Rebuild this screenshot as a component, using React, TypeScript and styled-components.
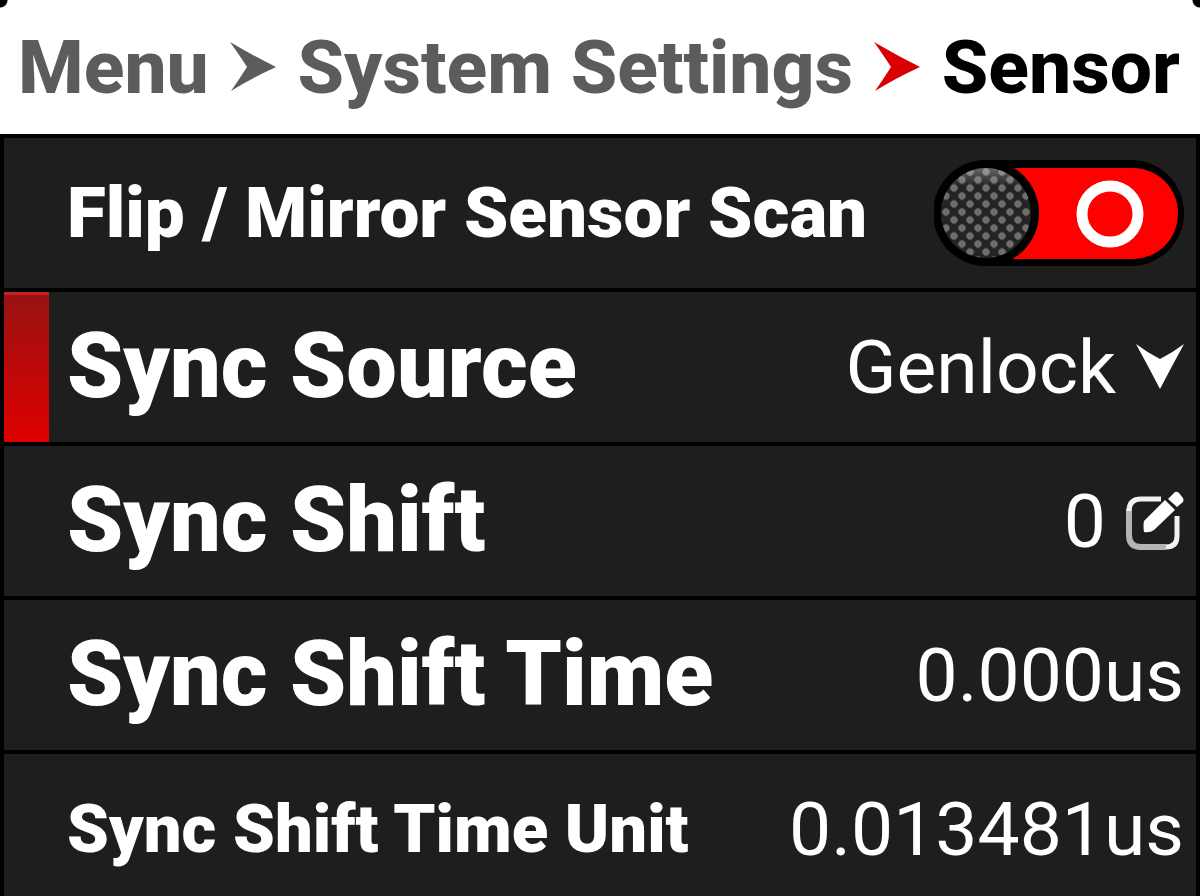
import React, { useState } from "react";
import styled, { createGlobalStyle, css } from "styled-components";

const GlobalStyle = createGlobalStyle`
  *, *::before, *::after { box-sizing: border-box; }
  body { margin: 0; background: #000; }
  button, input, select { font: inherit; color: inherit; }
`;

const Screen = styled.div`
  display: flex;
  flex-direction: column;
  height: 100vh;
  overflow: hidden;
  background: #000;
  color: #fff;
  font-family: Roboto, "Liberation Sans", sans-serif;
`;

const Header = styled.header`
  flex: none;
  min-height: 134px;
  padding: 0 20px 0 18px;
  display: flex;
  align-items: center;
  background:
    radial-gradient(circle at 0 0, #000 7px, transparent 8px),
    radial-gradient(circle at 100% 0, #000 7px, transparent 8px),
    #fff;
`;

const Crumbs = styled.nav`
  flex: 1;
  display: flex;
  align-items: center;
  justify-content: space-between;
  font-size: 75px;
  font-weight: 800;
  line-height: 90px;
  white-space: nowrap;
`;

const Crumb = styled.a<{ $current?: boolean }>`
  color: ${(p) => (p.$current ? "#000" : "#5c5c5c")};
  text-decoration: none;
`;

const Arrow = styled.svg<{ $color: string }>`
  flex: none;
  width: 46px;
  height: 50px;
  fill: ${(p) => p.$color};
`;

const List = styled.main`
  flex: none;
  padding: 0 4px;
`;

const Row = styled.div<{ $selected?: boolean }>`
  display: flex;
  align-items: center;
  justify-content: space-between;
  height: 154px;
  border-top: 4px solid #000;
  padding: 0 12px 0 20px;
  background: #1e1e1e;

  &::before {
    content: "";
    align-self: stretch;
    width: 45px;
    margin-left: -20px;
    ${(p) =>
      p.$selected &&
      css`
        border-top: 3px solid #c62222;
        background: linear-gradient(#991212, #e00000);
      `}
  }
`;

type LabelSize = "small" | "medium" | "large";

const labelSizes: Record<LabelSize, number> = { small: 67, medium: 71, large: 90 };

const labelText = css<{ $size: LabelSize }>`
  flex: 1;
  padding-left: 18px;
  font-size: ${(p) => labelSizes[p.$size]}px;
  font-weight: 900;
  line-height: 100px;
  white-space: nowrap;
`;

const Label = styled.label<{ $size: LabelSize }>`
  ${labelText}
`;

const Name = styled.span<{ $size: LabelSize }>`
  ${labelText}
`;

const Value = styled.span`
  font-size: 75px;
  font-weight: 400;
  white-space: nowrap;
`;

const Field = styled.div`
  display: flex;
  align-items: center;
  font-size: 75px;
`;

const Select = styled.select`
  appearance: none;
  border: 0;
  padding: 0;
  margin-right: 20px;
  background: transparent;
  field-sizing: content;
  text-align-last: right;
  outline: none;
`;

const NumberBox = styled.input`
  width: 160px;
  border: 0;
  padding: 0;
  margin-right: 20px;
  background: transparent;
  text-align: right;
  outline: none;
`;

const EditButton = styled.button`
  display: flex;
  border: 0;
  padding: 0;
  background: none;
`;

const ToggleBox = styled.span`
  position: relative;
  display: flex;
  width: 250px;
  height: 106px;
`;

const ToggleInput = styled.input`
  position: absolute;
  inset: 0;
  width: 100%;
  height: 100%;
  margin: 0;
  opacity: 0;
`;

const RightArrow = ({ color }: { color: string }) => (
  <Arrow $color={color} viewBox="0 0 46 50" aria-hidden="true">
    <path d="M0 0 Q22 13 46 25 Q22 36 1 49 Q10 36 17 25 Q10 14 0 0Z" />
  </Arrow>
);

const DownArrow = () => (
  <svg width="48" height="46" viewBox="0 0 48 46" aria-hidden="true">
    <path d="M0 0 Q12 9 24 15 Q36 9 48 0 Q36 22 24 45 Q12 22 0 0Z" fill="#fff" />
  </svg>
);

const EditIcon = () => (
  <svg width="58" height="60" viewBox="0 0 58 60" fill="none" aria-hidden="true">
    <path d="M3 18V44Q3 56 15 56H40" stroke="#b4b4b4" strokeWidth="6" />
    <path d="M35 8H15Q3 8 3 20" stroke="#f2f2f2" strokeWidth="5" />
    <path d="M51 25V45Q51 56 40 56" stroke="#f2f2f2" strokeWidth="5" />
    <path d="M18 30 L39 9 L49 19 L28 39 Q24 42 18 41 Q17 35 18 30Z" fill="#fff" />
    <path d="M42 8 L49 1 Q51 0 53 2 L57 7 Q58 9 57 11 L51 16Z" fill="#fff" />
  </svg>
);

const ToggleArt = ({ on }: { on: boolean }) => (
  <svg width="250" height="106" viewBox="0 0 250 106" aria-hidden="true">
    <defs>
      <pattern id="mesh" width="16" height="16" patternUnits="userSpaceOnUse">
        <rect width="16" height="16" fill="#222425" />
        <path d="M12 -1 L17 4 L12 9 L7 4Z M4 7 L9 12 L4 17 L-1 12Z" fill="#484746" />
        <circle cx="12" cy="4" r="3.4" fill="#706d6a" />
        <circle cx="4" cy="12" r="3.4" fill="#706d6a" />
      </pattern>
      <linearGradient id="sheen" x1="0" y1="0" x2="0" y2="1">
        <stop offset="0" stopColor="#fff" stopOpacity=".3" />
        <stop offset=".2" stopColor="#fff" stopOpacity="0" />
      </linearGradient>
    </defs>
    <rect width="250" height="106" rx="53" fill="#000" />
    <rect x="7" y="8" width="237" height="91" rx="45" fill={on ? "#1fae3a" : "#f00"} />
    <circle cx="176" cy="54" r="28" fill="none" stroke="#fff" strokeWidth="11" />
    <circle cx="52" cy="53" r="53" fill="#000" />
    <circle cx="52" cy="53" r="45" fill="url(#mesh)" />
    <circle cx="52" cy="53" r="45" fill="url(#sheen)" />
  </svg>
);

export default function App() {
  const [flip, setFlip] = useState(false);
  const [shift, setShift] = useState("0");
  return (
    <>
      <GlobalStyle />
      <Screen>
        <Header>
          <Crumbs aria-label="Breadcrumb">
            <Crumb href="#menu">Menu</Crumb>
            <RightArrow color="#5c5c5c" />
            <Crumb href="#system">System Settings</Crumb>
            <RightArrow color="#d90000" />
            <Crumb href="#sensor" $current aria-current="page">Sensor</Crumb>
          </Crumbs>
        </Header>
        <List>
          <Row>
            <Label $size="medium" htmlFor="flip">Flip / Mirror Sensor Scan</Label>
            <ToggleBox>
              <ToggleArt on={flip} />
              <ToggleInput
                id="flip"
                type="checkbox"
                role="switch"
                checked={flip}
                onChange={(e) => setFlip(e.target.checked)}
              />
            </ToggleBox>
          </Row>
          <Row $selected>
            <Label $size="large" htmlFor="source">Sync Source</Label>
            <Field>
              <Select id="source" defaultValue="Genlock">
                <option>Genlock</option>
              </Select>
              <DownArrow />
            </Field>
          </Row>
          <Row>
            <Label $size="large" htmlFor="shift">Sync Shift</Label>
            <Field>
              <NumberBox id="shift" value={shift} onChange={(e) => setShift(e.target.value)} />
              <EditButton type="button" aria-label="Edit sync shift">
                <EditIcon />
              </EditButton>
            </Field>
          </Row>
          <Row>
            <Name $size="large">Sync Shift Time</Name>
            <Value>0.000us</Value>
          </Row>
          <Row>
            <Name $size="small">Sync Shift Time Unit</Name>
            <Value>0.013481us</Value>
          </Row>
        </List>
      </Screen>
    </>
  );
}
